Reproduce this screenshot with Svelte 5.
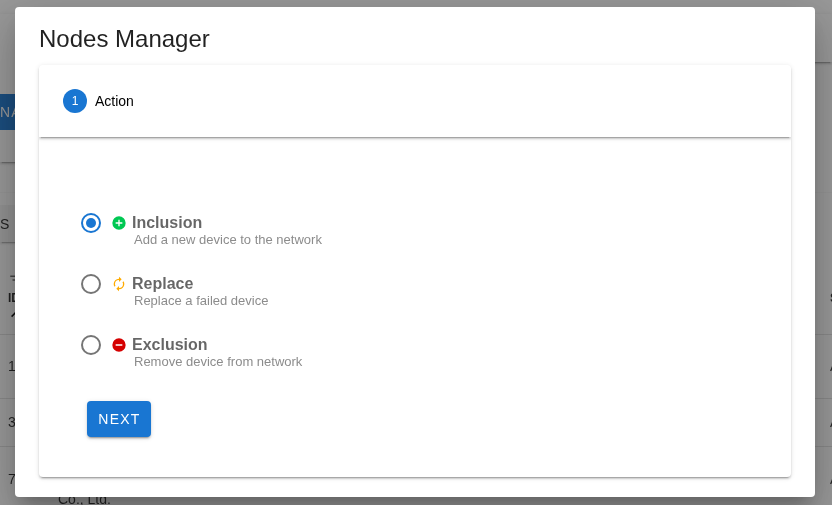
<script>
  const options = [
    { value: 'inclusion', name: 'Inclusion', hint: 'Add a new device to the network', color: '#00c853',
      path: 'M17,13H13V17H11V13H7V11H11V7H13V11H17M12,2A10,10 0 0,0 2,12A10,10 0 0,0 12,22A10,10 0 0,0 22,12A10,10 0 0,0 12,2Z' },
    { value: 'replace', name: 'Replace', hint: 'Replace a failed device', color: '#ffab00',
      path: 'M12,6V9L16,5L12,1V4A8,8 0 0,0 4,12C4,13.57 4.46,15.03 5.24,16.26L6.7,14.8C6.25,13.97 6,13 6,12A6,6 0 0,1 12,6M18.76,7.74L17.3,9.2C17.74,10.04 18,11 18,12A6,6 0 0,1 12,18V15L8,19L12,23V20A8,8 0 0,0 20,12C20,10.43 19.54,8.97 18.76,7.74Z' },
    { value: 'exclusion', name: 'Exclusion', hint: 'Remove device from network', color: '#d50000',
      path: 'M17,13H7V11H17M12,2A10,10 0 0,0 2,12A10,10 0 0,0 12,22A10,10 0 0,0 22,12A10,10 0 0,0 12,2Z' }
  ];
  const nodes = [
    { id: 1, maker: [], status: 'Alive' },
    { id: 3, maker: [], status: 'Alive' },
    { id: 7, maker: ['', '', 'Co., Ltd.'], status: 'Alive' }
  ];
  let action = $state('inclusion');
</script>

<div class="page" inert>
  <div class="panels">
    <section class="panel actions"><button class="manage">NA</button></section>
    <section class="panel side"></section>
  </div>
  <section class="nodes">
    <div class="toolbar"><button class="tool">S</button></div>
    <table>
      <thead>
        <tr>
          <th class="id">
            <svg viewBox="0 0 24 24"><path d="M6,13H18V11H6M3,6V8H21V6M10,18H14V16H10V18Z" /></svg>
            <span>ID</span>
            <svg viewBox="0 0 24 24"><path d="M13,20H11V8L5.5,13.5L4.08,12.08L12,4.16L19.92,12.08L18.5,13.5L13,8V20Z" /></svg>
          </th>
          <th></th>
          <th class="status">Status</th>
        </tr>
      </thead>
      <tbody>
        {#each nodes as node, i}
          <tr class:tall={i !== 1}>
            <td>{node.id}</td>
            <td>{#each node.maker as line}<div class="line">{line}</div>{/each}</td>
            <td class="status">{node.status}</td>
          </tr>
        {/each}
      </tbody>
    </table>
  </section>
</div>

<div class="overlay">
  <div class="dialog" role="dialog" aria-modal="true" aria-labelledby="dialog-title">
    <h1 id="dialog-title">Nodes Manager</h1>
    <div class="stepper">
      <header>
        <span class="step">1</span>
        <span>Action</span>
      </header>
      <form onsubmit={(e) => e.preventDefault()}>
        <div class="options" role="radiogroup" aria-label="Action">
          {#each options as option}
            <label>
              <input type="radio" name="action" value={option.value} bind:group={action} />
              <svg viewBox="0 0 24 24" fill={option.color} aria-hidden="true"><path d={option.path} /></svg>
              <span class="text">
                <strong>{option.name}</strong>
                <span class="hint">{option.hint}</span>
              </span>
            </label>
          {/each}
        </div>
        <button class="next" type="submit">NEXT</button>
      </form>
    </div>
  </div>
</div>

<style>
  :global(body) {
    background: #fff;
    overflow: hidden;
  }
  .page, .overlay {
    position: fixed;
    inset: 0;
    box-sizing: border-box;
    overflow: hidden;
    font-family: "Liberation Sans", Arial, sans-serif;
    font-size: 14px;
    color: rgba(0, 0, 0, 0.87);
  }
  button {
    font: inherit;
    border: 0;
    letter-spacing: 0.09em;
  }

  .page {
    padding-top: 14px;
  }
  .panels {
    display: flex;
    align-items: flex-start;
    height: 179px;
  }
  .panel {
    flex: 1;
    box-sizing: border-box;
    box-shadow: 0 3px 1px -2px rgba(0, 0, 0, 0.2), 0 2px 2px 0 rgba(0, 0, 0, 0.14), 0 1px 5px 0 rgba(0, 0, 0, 0.12);
  }
  .actions {
    height: 148px;
    padding-top: 80px;
  }
  .side {
    height: 48px;
  }
  .manage {
    height: 36px;
    width: 80px;
    padding: 0;
    text-align: left;
    color: #fff;
    background: #1976d2;
  }
  .nodes {
    box-shadow: 0 0 1px rgba(0, 0, 0, 0.2);
  }
  .toolbar {
    height: 69px;
    padding-top: 12px;
    box-sizing: border-box;
  }
  .tool {
    height: 37px;
    width: 80px;
    padding: 0;
    text-align: left;
    background: #f5f5f5;
    color: rgba(0, 0, 0, 0.87);
    box-shadow: 0 3px 1px -2px rgba(0, 0, 0, 0.2), 0 2px 2px 0 rgba(0, 0, 0, 0.14);
  }
  table {
    width: 100%;
    border-collapse: separate;
    border-spacing: 0;
    table-layout: fixed;
  }
  th, td {
    box-sizing: border-box;
    height: 48px;
    padding: 0 8px;
    text-align: left;
    border-bottom: 1px solid rgba(0, 0, 0, 0.12);
  }
  td {
    padding-bottom: 1px;
  }
  th {
    height: 73px;
    font-size: 12px;
  }
  .tall td {
    height: 64px;
  }
  .id {
    width: 50px;
  }
  .id svg, .id span {
    display: block;
    width: 18px;
    height: 18px;
    line-height: 18px;
    fill: #000;
  }
  .id svg:first-child {
    opacity: 0.6;
  }
  .status {
    width: 2px;
    padding-left: 0;
    padding-right: 0;
    white-space: nowrap;
  }
  .line {
    height: 21px;
    line-height: 21px;
  }

  .overlay {
    display: grid;
    padding: 7px 17px 8px 15px;
    background: rgba(33, 33, 33, 0.46);
  }
  .dialog {
    box-sizing: border-box;
    display: flex;
    flex-direction: column;
    padding: 16px 24px 20px;
    border-radius: 4px;
    background: #fff;
    box-shadow: 0 11px 15px -7px rgba(0, 0, 0, 0.2), 0 24px 38px 3px rgba(0, 0, 0, 0.14), 0 9px 46px 8px rgba(0, 0, 0, 0.12);
  }
  h1 {
    margin: 0 0 10px;
    font-size: 24px;
    line-height: 32px;
    font-weight: 400;
  }
  .stepper {
    flex: 1;
    border-radius: 4px;
    box-shadow: 0 3px 1px -2px rgba(0, 0, 0, 0.2), 0 2px 2px 0 rgba(0, 0, 0, 0.14), 0 1px 5px 0 rgba(0, 0, 0, 0.12);
  }
  header {
    display: flex;
    align-items: center;
    gap: 8px;
    height: 72px;
    padding: 0 24px;
    box-sizing: border-box;
    color: #000;
    box-shadow: 0 3px 1px -2px rgba(0, 0, 0, 0.2), 0 2px 2px 0 rgba(0, 0, 0, 0.14), 0 1px 5px 0 rgba(0, 0, 0, 0.12);
    clip-path: inset(0 0 -8px 0);
  }
  .step {
    width: 24px;
    border-radius: 50%;
    font-size: 12px;
    line-height: 24px;
    text-align: center;
    color: #fff;
    background: #1976d2;
  }
  form {
    padding: 76px 42px 40px;
  }
  .options {
    display: flex;
    flex-direction: column;
    gap: 27px;
  }
  label {
    display: flex;
    align-items: flex-start;
    color: rgba(0, 0, 0, 0.6);
  }
  input {
    appearance: none;
    display: grid;
    place-items: center;
    box-sizing: border-box;
    width: 20px;
    height: 20px;
    margin: 0 10px 0 0;
    border: 2px solid #757575;
    border-radius: 50%;
  }
  input:checked {
    border-color: #1976d2;
  }
  input:checked::before {
    content: "";
    width: 10px;
    height: 10px;
    border-radius: 50%;
    background: #1976d2;
  }
  label svg {
    width: 16px;
    height: 16px;
    margin: 2px 5px 0 0;
  }
  .text {
    display: grid;
  }
  strong {
    font-size: 16px;
    line-height: 19px;
  }
  .hint {
    padding-left: 2px;
    font-size: 13px;
    line-height: 15px;
    color: #8c8c8c;
  }
  .next {
    display: block;
    height: 36px;
    width: 64px;
    margin: 32px 6px 0;
    padding: 0 0 0 1px;
    border-radius: 4px;
    color: #fff;
    background: #1976d2;
    box-shadow: 0 3px 1px -2px rgba(0, 0, 0, 0.2), 0 2px 2px 0 rgba(0, 0, 0, 0.14), 0 1px 5px 0 rgba(0, 0, 0, 0.12);
  }
</style>
